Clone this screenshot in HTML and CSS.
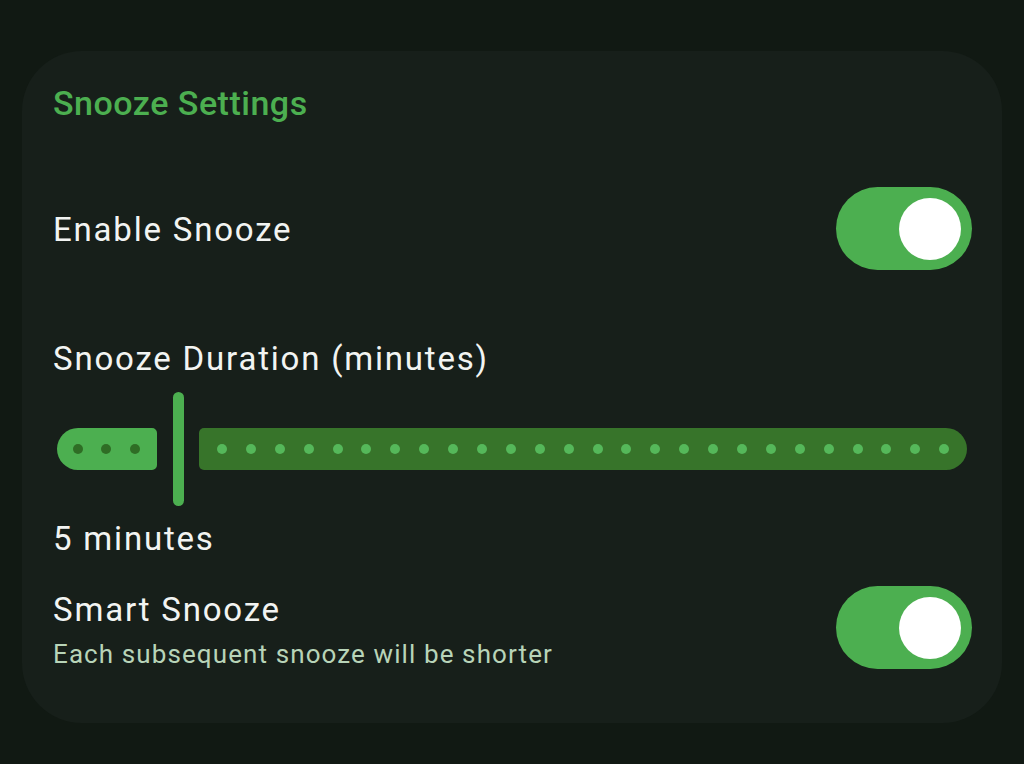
FILE: index.html
```html
<!DOCTYPE html>
<html lang="en">
<head>
<meta charset="utf-8">
<title>Snooze Settings</title>
<link rel="stylesheet" href="styles.css">
</head>
<body>
<section class="card">
  <h2 class="card-title">Snooze Settings</h2>

  <div class="row row-enable">
    <span class="label">Enable Snooze</span>
    <span class="switch"><span class="thumb"></span></span>
  </div>

  <div class="label duration-label">Snooze Duration (minutes)</div>

  <div class="slider">
    <div class="track active">
      <span class="dot"></span><span class="dot"></span><span class="dot"></span>
    </div>
    <div class="handle"></div>
    <div class="track inactive">
      <span class="dot"></span><span class="dot"></span><span class="dot"></span><span class="dot"></span><span class="dot"></span><span class="dot"></span><span class="dot"></span><span class="dot"></span><span class="dot"></span><span class="dot"></span><span class="dot"></span><span class="dot"></span><span class="dot"></span><span class="dot"></span><span class="dot"></span><span class="dot"></span><span class="dot"></span><span class="dot"></span><span class="dot"></span><span class="dot"></span><span class="dot"></span><span class="dot"></span><span class="dot"></span><span class="dot"></span><span class="dot"></span><span class="dot"></span>
    </div>
  </div>

  <div class="label value-label">5 minutes</div>

  <div class="row row-smart">
    <div class="text-col">
      <span class="label">Smart Snooze</span>
      <span class="sublabel">Each subsequent snooze will be shorter</span>
    </div>
    <span class="switch"><span class="thumb"></span></span>
  </div>
</section>
</body>
</html>
```

FILE: styles.css
```css
html, body {
  margin: 0;
  padding: 0;
}
body {
  background: #111913;
  width: 1024px;
  height: 764px;
  overflow: hidden;
  font-family: Roboto, "Noto Sans", sans-serif;
  padding-top: 51px;
  padding-left: 22px;
  box-sizing: border-box;
}
.card {
  width: 980px;
  height: 672px;
  box-sizing: border-box;
  background: #171f1a;
  border-radius: 60px;
  padding: 32px 30px 0 31px;
  display: flex;
  flex-direction: column;
}
.card-title {
  margin: 0;
  font-size: 34px;
  line-height: 40px;
  font-weight: 500;
  letter-spacing: 0.5px;
  color: #4caf50;
}
.label {
  font-size: 33px;
  line-height: 40px;
  letter-spacing: 1.8px;
  color: #f2f4f2;
  font-weight: 400;
}
.row {
  display: flex;
  align-items: center;
  justify-content: space-between;
}
.row-enable {
  margin-top: 64px;
}
.row-enable .label {
  margin-top: 3px;
}
.switch {
  width: 136px;
  height: 83px;
  border-radius: 42px;
  background: #4caf50;
  display: flex;
  align-items: center;
  justify-content: flex-end;
  padding-right: 11px;
  box-sizing: border-box;
}
.thumb {
  width: 62px;
  height: 62px;
  border-radius: 50%;
  background: #ffffff;
}
.duration-label {
  margin-top: 69px;
}
.slider {
  margin-top: 13px;
  height: 114px;
  display: flex;
  align-items: center;
  padding-left: 4px;
  padding-right: 5px;
}
.track {
  height: 42px;
  display: flex;
  align-items: center;
  gap: 18.9px;
  box-sizing: border-box;
}
.track.active {
  width: 100px;
  background: #4caf50;
  border-radius: 21px 5px 5px 21px;
  padding-left: 15.5px;
}
.track.inactive {
  flex: 1;
  background: #37742a;
  border-radius: 5px 21px 21px 5px;
  padding-left: 18px;
}
.dot {
  width: 10px;
  height: 10px;
  border-radius: 50%;
  flex: none;
}
.active .dot {
  background: #2f6d25;
}
.inactive .dot {
  background: #55b85a;
}
.handle {
  width: 11px;
  height: 114px;
  border-radius: 6px;
  background: #4caf50;
  margin: 0 15px 0 16px;
}
.value-label {
  margin-top: 13px;
}
.row-smart {
  margin-top: 26px;
}
.text-col {
  display: flex;
  flex-direction: column;
  margin-top: 5px;
}
.sublabel {
  font-size: 26px;
  line-height: 32px;
  letter-spacing: 1.1px;
  color: #b8d4b8;
  margin-top: 8px;
}
```
